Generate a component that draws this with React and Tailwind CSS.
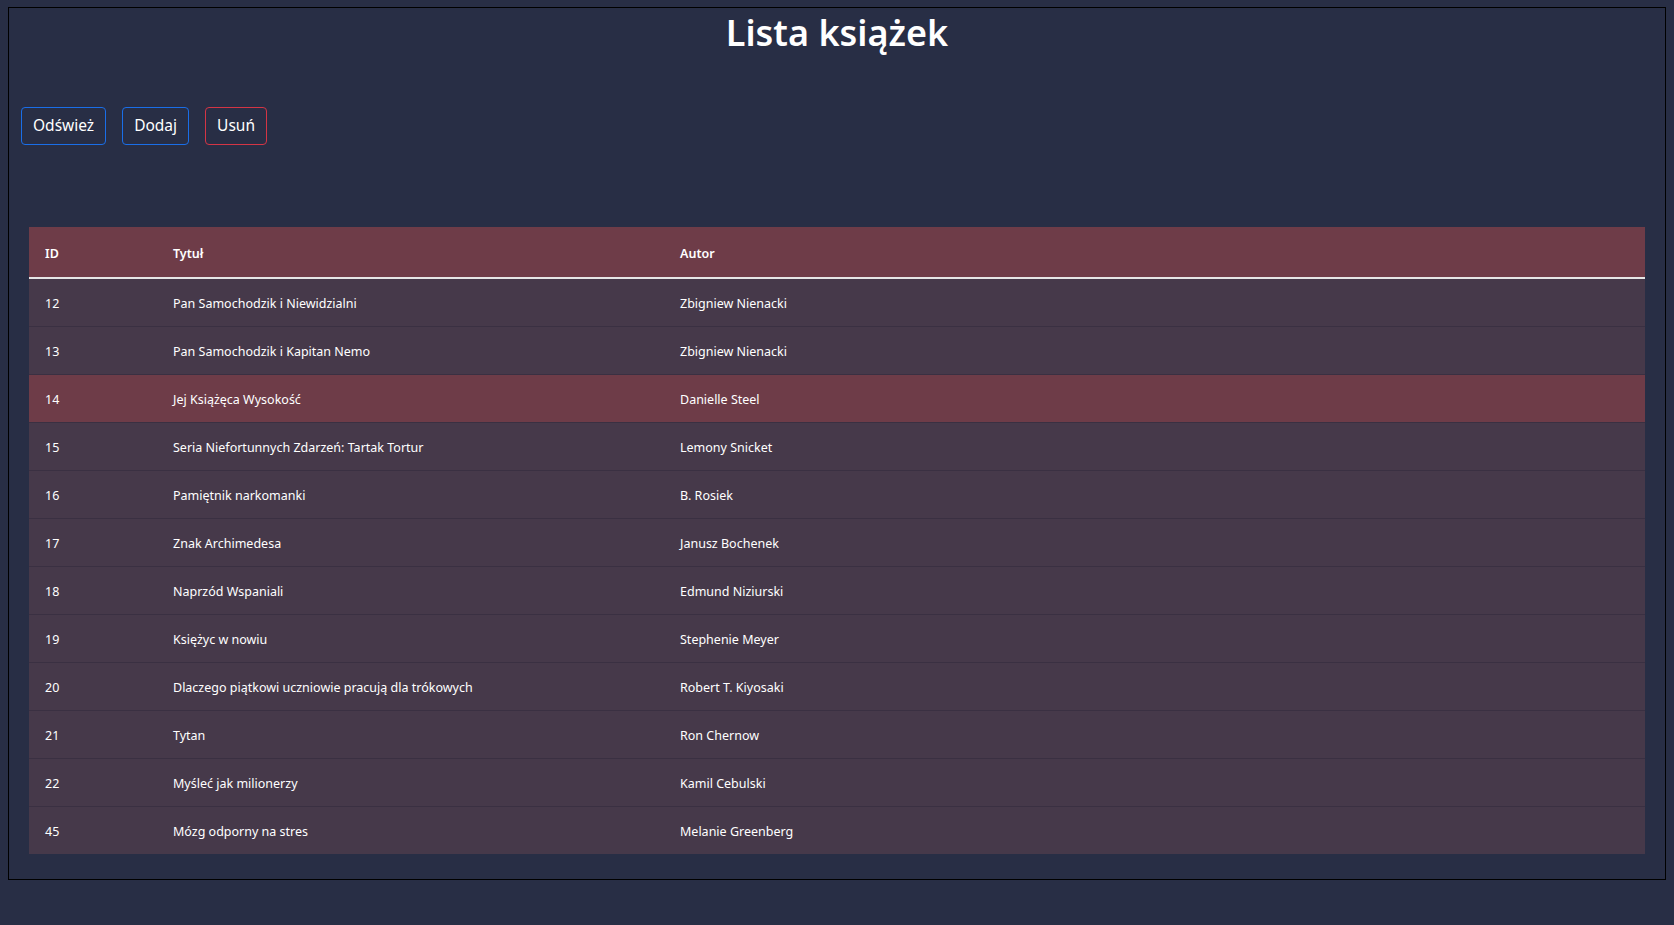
import React from 'react';

const BOOKS = [
  { id: 12, title: 'Pan Samochodzik i Niewidzialni', author: 'Zbigniew Nienacki' },
  { id: 13, title: 'Pan Samochodzik i Kapitan Nemo', author: 'Zbigniew Nienacki' },
  { id: 14, title: 'Jej Książęca Wysokość', author: 'Danielle Steel' },
  { id: 15, title: 'Seria Niefortunnych Zdarzeń: Tartak Tortur', author: 'Lemony Snicket' },
  { id: 16, title: 'Pamiętnik narkomanki', author: 'B. Rosiek' },
  { id: 17, title: 'Znak Archimedesa', author: 'Janusz Bochenek' },
  { id: 18, title: 'Naprzód Wspaniali', author: 'Edmund Niziurski' },
  { id: 19, title: 'Księżyc w nowiu', author: 'Stephenie Meyer' },
  { id: 20, title: 'Dlaczego piątkowi uczniowie pracują dla trókowych', author: 'Robert T. Kiyosaki' },
  { id: 21, title: 'Tytan', author: 'Ron Chernow' },
  { id: 22, title: 'Myśleć jak milionerzy', author: 'Kamil Cebulski' },
  { id: 45, title: 'Mózg odporny na stres', author: 'Melanie Greenberg' }
];

const SELECTED = 14;

export default function App() {
  return (
    <div
      className="min-h-screen bg-[#282e45] pt-[7px] pb-[45px] px-2 text-white"
      style={{ fontFamily: '"Noto Sans", "Open Sans", sans-serif' }}
    >
      <div className="border border-black px-5 pb-[25px]">
        {/* Header */}
        <h1 className="text-center text-[36px] font-semibold leading-[46px] mt-[2px]">Lista książek</h1>

        {/* Actions */}
        <div className="flex gap-4 mt-[51px] -ml-[8px]">
          <button className="h-[38px] px-[11px] border border-[#1a6ee8] rounded text-[15.5px]">Odśwież</button>
          <button className="h-[38px] px-[11px] border border-[#1a6ee8] rounded text-[15.5px]">Dodaj</button>
          <button className="h-[38px] px-[11px] border border-[#d43545] rounded text-[15.5px]">Usuń</button>
        </div>

        {/* Table */}
        <table className="w-full mt-[82px] border-collapse text-[12.5px]">
          <thead>
            <tr className="bg-[#6e3c48] border-b-2 border-[#e6e6e6] h-[51px] text-left">
              <th className="w-[128px] pl-4 pt-1 font-semibold">ID</th>
              <th className="w-[507px] pl-4 pt-1 font-semibold">Tytuł</th>
              <th className="pl-4 pt-1 font-semibold">Autor</th>
            </tr>
          </thead>
          <tbody>
            {BOOKS.map((b, i) => (
              <tr
                key={b.id}
                className={`h-[48px] ${b.id === SELECTED ? 'bg-[#6e3c48]' : 'bg-[#46394a]'} ${i < BOOKS.length - 1 ? 'border-b border-[#3a3042]' : ''}`}
              >
                <td className="pl-4 pt-1">{b.id}</td>
                <td className="pl-4 pt-1">{b.title}</td>
                <td className="pl-4 pt-1">{b.author}</td>
              </tr>
            ))}
          </tbody>
        </table>
      </div>
    </div>
  );
}
